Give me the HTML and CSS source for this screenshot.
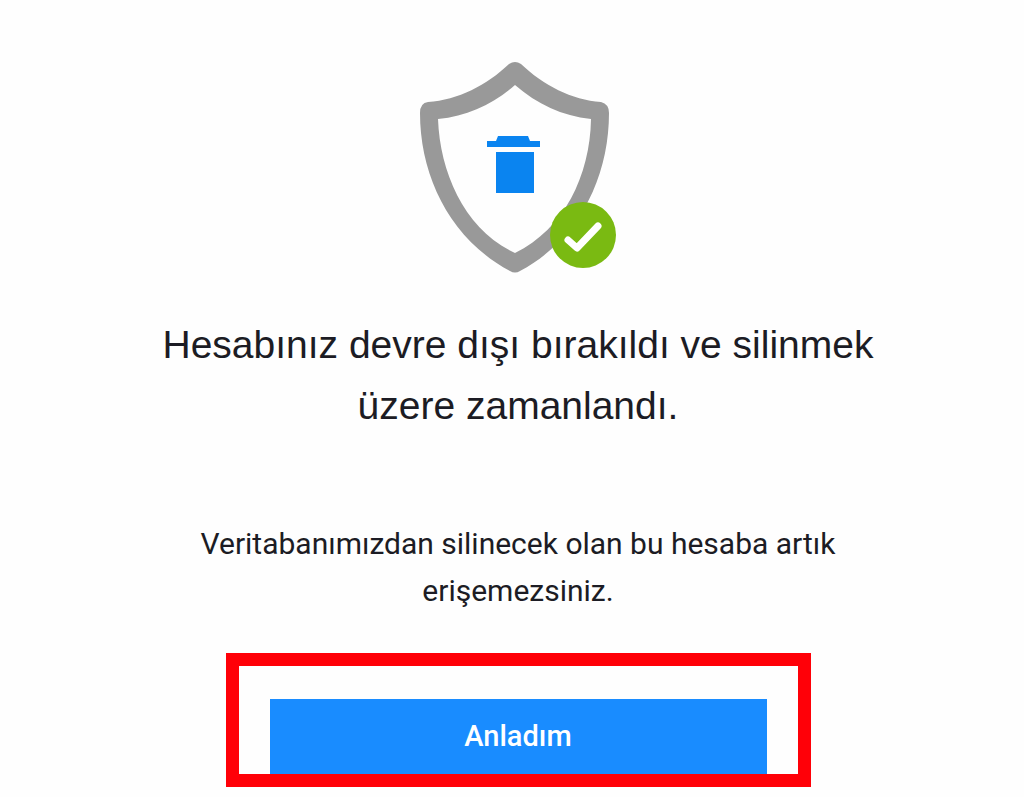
FILE: index.html
```html
<!DOCTYPE html>
<html lang="tr">
<head>
    <meta charset="UTF-8">
    <meta name="viewport" content="width=device-width, initial-scale=1">
    <title>Hesap silme</title>
    <link rel="stylesheet" href="styles.css">
</head>
<body>
<main class="box">
    <!--shield-->
    <svg class="shield" viewBox="0 0 198 214" aria-hidden="true">
        <path fill="#999" fill-rule="evenodd" d="M90 4Q96 0 102 4C124 25 153 40 182 42Q190 44 190 53C190 116 161 179 101 211Q96 214 91 211C31 179 1 116 1 53Q1 43 9 42C39 40 68 25 90 4ZM96 25C74 44 49 56 19 59C21 113 46 170 96 193C145 169 171 116 172 59C143 56 118 44 96 25Z"/>
        <path fill="#0a84f0" d="M79 76H109L111 81H121V87H68V81H77ZM77 92H115V133H77Z"/>
        <circle cx="164" cy="175" r="33" fill="#7aba12"/>
        <path fill="none" stroke="#fff" stroke-width="7" stroke-linecap="round" stroke-linejoin="round" d="M149 180L158 188L179 166"/>
    </svg>
    <h1 class="title">Hesabınız devre dışı bırakıldı ve silinmek üzere zamanlandı.</h1>
    <p class="text">Veritabanımızdan silinecek olan bu hesaba artık erişemezsiniz.</p>
    <div class="frame">
        <button class="btn" type="button">Anladım</button>
    </div>
</main>
</body>
</html>
```
FILE: styles.css
```css
* {
    margin: 0;
    padding: 0;
    box-sizing: border-box;
}

body {
    background-color: #fefefe;
    color: #1c1c24;
    padding: 60px 0 8px 12px;
}

.box {
    display: flex;
    flex-direction: column;
    align-items: center;
    max-width: 760px;
    margin: 0 auto;
    text-align: center;
}

.shield {
    width: 198px;
    height: 214px;
}

.title {
    margin-top: 40px;
    font: 400 39px/61px "Liberation Sans", Arial, sans-serif;
}

.text {
    max-width: 660px;
    margin-top: 84px;
    font: 400 30px/47px Roboto, sans-serif;
}

.frame {
    width: 100%;
    max-width: 585px;
    margin-top: 39px;
    padding: 33px 31px 0;
    border: 13px solid #ff0008;
}

.btn {
    display: block;
    width: 100%;
    height: 75px;
    border: none;
    background-color: #198cff;
    color: #fff;
    font: 500 29px/75px Roboto, sans-serif;
    cursor: pointer;
}
```
